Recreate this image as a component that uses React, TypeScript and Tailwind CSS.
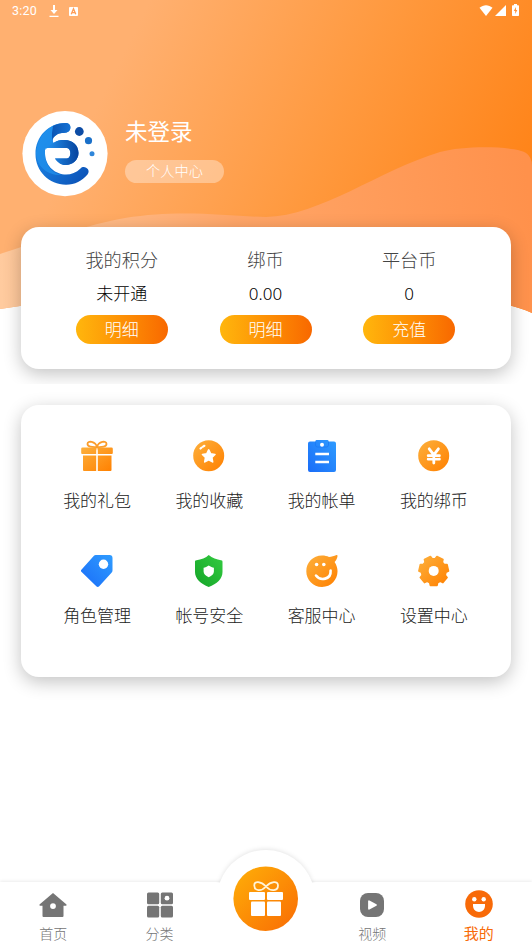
import type { ReactNode } from "react";

const balances = [
  { title: "我的积分", value: "未开通", action: "明细" },
  { title: "绑币", value: "0.00", action: "明细" },
  { title: "平台币", value: "0", action: "充值" },
];

const menu: { label: string; icon: ReactNode }[] = [
  { label: "我的礼包", icon: <GiftIcon /> },
  { label: "我的收藏", icon: <StarIcon /> },
  { label: "我的帐单", icon: <BillIcon /> },
  { label: "我的绑币", icon: <CoinIcon /> },
  { label: "角色管理", icon: <TagIcon /> },
  { label: "帐号安全", icon: <ShieldIcon /> },
  { label: "客服中心", icon: <ServiceIcon /> },
  { label: "设置中心", icon: <GearIcon /> },
];

function Gradients() {
  return (
    <svg className="absolute h-0 w-0" aria-hidden="true">
      <defs>
        <linearGradient id="orange" x1="0" y1="0" x2="1" y2="1">
          <stop offset="0" stopColor="#fdb03c" />
          <stop offset="1" stopColor="#ff8000" />
        </linearGradient>
        <linearGradient id="blue" x1="0" y1="1" x2="1" y2="0">
          <stop offset="0" stopColor="#1a6df8" />
          <stop offset="1" stopColor="#2f9cff" />
        </linearGradient>
        <linearGradient id="green" x1="1" y1="0" x2="0" y2="1">
          <stop offset="0" stopColor="#33cb40" />
          <stop offset="1" stopColor="#14a428" />
        </linearGradient>
      </defs>
    </svg>
  );
}

function GiftIcon() {
  return (
    <svg viewBox="0 0 32 32" className="h-8 w-8">
      <path
        d="M16 7C14.500 1.500 6.500 0 6.500 4C6.500 7 11 7.200 16 7C21 7.200 25.500 7 25.500 4C25.500 0 17.500 1.500 16 7Z"
        fill="none"
        stroke="#fb9d2b"
        strokeWidth="1.800"
      />
      <path
        d="M1.500 7.500H15.200V14H1.200a1 1 0 0 1-1-1V8.800a1.300 1.300 0 0 1 1.300-1.300ZM16.800 7.500H30.500a1.300 1.300 0 0 1 1.300 1.300V13a1 1 0 0 1-1 1H16.800ZM2 15.500H15.200V31H3a1 1 0 0 1-1-1ZM16.800 15.500H30.500V30a1 1 0 0 1-1 1H16.800Z"
        fill="url(#orange)"
      />
    </svg>
  );
}

function StarIcon() {
  return (
    <svg viewBox="0 0 32 32" className="h-8 w-8">
      <circle cx="15.700" cy="15.700" r="15.500" fill="url(#orange)" />
      <path
        d="M15.700 9.900l1.900 3.900 4.300.7-3.100 3 .8 4.300-3.900-2-3.900 2 .8-4.300-3.100-3 4.300-.7Z"
        fill="#fff"
        stroke="#fff"
        strokeWidth="1.700"
        strokeLinejoin="round"
      />
      <path
        d="M7.500 8.500L8.400 7.700M10 6.600L11.400 5.800"
        stroke="#fff"
        strokeWidth="2.200"
        strokeLinecap="round"
      />
    </svg>
  );
}

function BillIcon() {
  return (
    <svg viewBox="0 0 32 32" className="h-8 w-8">
      <path
        d="M4 1.500H9.500V1a1 1 0 0 1 1-1H21.500a1 1 0 0 1 1 1V1.500H28a2 2 0 0 1 2 2V30a2 2 0 0 1-2 2H4a2 2 0 0 1-2-2V3.500a2 2 0 0 1 2-2Z"
        fill="url(#blue)"
      />
      <path d="M9.500 1.700V5a2 2 0 0 0 2 2H20.500a2 2 0 0 0 2-2V1.700" fill="none" stroke="#1c78f5" strokeWidth=".8" />
      <circle cx="16" cy="4.800" r="2" fill="#fff" />
      <path d="M9.300 14H23M9.300 22H23" stroke="#fff" strokeWidth="2.600" />
    </svg>
  );
}

function CoinIcon() {
  return (
    <svg viewBox="0 0 32 32" className="h-8 w-8">
      <circle cx="15.700" cy="15.700" r="15.500" fill="url(#orange)" />
      <path
        d="M11.200 8.800L15.800 14.800L20.400 8.800M15.800 14.800V23M10.200 15.700H21.400M10.200 19.200H21.400"
        fill="none"
        stroke="#fff"
        strokeWidth="2.800"
        strokeLinecap="round"
        strokeLinejoin="round"
      />
      <path d="M10.500 17.500H14.300M17.300 17.500H21" stroke="#fc9721" strokeWidth=".8" />
    </svg>
  );
}

function TagIcon() {
  return (
    <svg viewBox="0 0 32 32" className="h-8 w-8">
      <path
        d="M14.800 0H28.500a3 3 0 0 1 3 3V15.500a3 3 0 0 1-1 2.200L18.200 31.200a2 2 0 0 1-2.900 0L.400 16.700a1.300 1.300 0 0 1 0-1.900L12.700 1A2.800 2.800 0 0 1 14.800 0Z"
        fill="url(#blue)"
      />
      <circle cx="22.500" cy="9.200" r="4.700" fill="#fff" />
    </svg>
  );
}

function ShieldIcon() {
  return (
    <svg viewBox="0 0 32 32" className="h-8 w-8">
      <path
        d="M15.700 0C19 2.800 24 4.800 28 5.200C29.500 5.400 29.500 6 29.500 7V17C29.500 24 24 28.800 15.700 32C8 28.800 2 24 2 17V7C2 6 2 5.400 3.500 5.200C8 4.800 13 2.800 15.700 0Z"
        fill="url(#green)"
      />
      <path d="M15.700 10.600C17.500 11.900 19.500 12.600 20.900 12.700V16.500C20.900 19 19 20.900 15.700 22.200C12.500 20.900 10.600 19 10.600 16.500V12.700C12.200 12.600 14 11.900 15.700 10.600Z" fill="#fff" />
    </svg>
  );
}

function ServiceIcon() {
  return (
    <svg viewBox="0 0 32 32" className="h-8 w-8">
      <path
        d="M16 .500C19 .500 21 1 23 2C25.500 1.800 28 1.300 30.500 .100C31.300 0 31.700 .500 31.500 1.200C31.200 3.300 30.200 5.300 28.600 7C36 18 28.500 32 16 32C7 32 .300 24.800 .300 16.200C.300 7.500 7 .500 16 .500Z"
        fill="url(#orange)"
      />
      <circle cx="10.600" cy="9.500" r="1.800" fill="#fff" />
      <circle cx="17.800" cy="9.500" r="1.800" fill="#fff" />
      <path
        d="M10 20.500C14.500 26.500 25.300 24.500 24.600 15.500"
        fill="none"
        stroke="#fff"
        strokeWidth="2.600"
        strokeLinecap="round"
      />
    </svg>
  );
}

// seven teeth, one of them pointing straight down
const gearPoints = Array.from({ length: 7 }, (_, i) => {
  const middle = 90 + (i * 360) / 7;
  return [
    [-19, 12.3],
    [-13, 14.8],
    [13, 14.8],
    [19, 12.3],
  ]
    .map(([offset, radius]) => {
      const angle = ((middle + offset) * Math.PI) / 180;
      return `${(15.7 + radius * Math.cos(angle)).toFixed(2)},${(16 + radius * Math.sin(angle)).toFixed(2)}`;
    })
    .join(" ");
}).join(" ");

function GearIcon() {
  return (
    <svg viewBox="0 0 32 32" className="h-8 w-8">
      <polygon
        points={gearPoints}
        fill="url(#orange)"
        stroke="url(#orange)"
        strokeWidth="1.600"
        strokeLinejoin="round"
      />
      <circle cx="15.700" cy="15.900" r="5" fill="#fff" />
    </svg>
  );
}

function HeaderWaves() {
  return (
    <svg
      viewBox="0 0 532 384"
      className="absolute inset-x-0 top-0 -z-10 h-[384px] w-full"
      preserveAspectRatio="none"
      aria-hidden="true"
    >
      <defs>
        <linearGradient id="sky" gradientUnits="userSpaceOnUse" x1="120" y1="60" x2="520" y2="260">
          <stop offset="0" stopColor="#ffb070" />
          <stop offset=".5" stopColor="#ff993e" />
          <stop offset="1" stopColor="#ff8012" />
        </linearGradient>
        <linearGradient id="wave" gradientUnits="userSpaceOnUse" x1="0" y1="280" x2="532" y2="220">
          <stop offset="0" stopColor="#ffcb9f" />
          <stop offset=".45" stopColor="#ffa668" />
          <stop offset="1" stopColor="#ff914b" />
        </linearGradient>
      </defs>
      <path d="M0 0H532V313C523 309 516 307 508 305C420 285 110 285 20 306L0 309Z" fill="url(#sky)" />
      <path
        d="M0 254C40 241 90 224 125 218C180 209 225 216 266 217C320 216 380 170 440 152C465 145 515 146 526 153Q532 157 532 166V313C523 309 516 307 508 305C420 285 110 285 20 306L0 309Z"
        fill="url(#wave)"
      />
    </svg>
  );
}

function StatusBar() {
  return (
    <div className="flex h-[22px] items-center justify-between pr-[13px] pl-3 text-white">
      <div className="flex items-center">
        <span className="w-[37px] font-['Roboto',sans-serif] text-[12.500px] leading-none tracking-[0.2px]">3:20</span>
        <svg viewBox="0 0 10 12" className="h-3 w-2.5" fill="currentColor">
          <path d="M4 0h2v5h2.500L5 9 1.500 5H4ZM.500 10.800h9V12h-9Z" />
        </svg>
        <svg viewBox="0 0 10 10" className="ml-2.5 h-[9px] w-[9px]">
          <rect width="10" height="10" rx="1" fill="#fff" />
          <path d="M2.500 8L5 2L7.500 8M3.500 6.200h3" fill="none" stroke="#ff9d56" strokeWidth="1.500" />
        </svg>
      </div>
      <div className="mb-[2px] flex items-center gap-[2px]">
        <svg viewBox="0 0 13 11" className="h-[11px] w-[14px]" fill="currentColor">
          <path d="M0 2.800C4-.600 9-.600 13 2.800L6.500 11Z" />
        </svg>
        <svg viewBox="0 0 11 11" className="h-[11px] w-[11px]" fill="currentColor">
          <path d="M11 0V11H0Z" />
        </svg>
        <svg viewBox="0 0 7 12" className="ml-1 h-3 w-[7px]">
          <path d="M2 0h3v1.300h1.300a.7.7 0 0 1 .7.7v9.300a.7.7 0 0 1-.7.7H.7a.7.7 0 0 1-.7-.7V2a.7.7 0 0 1 .7-.7H2Z" fill="#fff" />
          <path d="M4 3L1.800 7H3.200V10L5.300 6H4Z" fill="#ff9137" />
        </svg>
      </div>
    </div>
  );
}

function Avatar() {
  return (
    <svg viewBox="0 0 86 86" className="h-[86px] w-[86px] shrink-0">
      <defs>
        <linearGradient id="arc" x1="0" y1="0" x2="1" y2="1">
          <stop offset="0" stopColor="#1c8cec" />
          <stop offset=".5" stopColor="#1674d6" />
          <stop offset="1" stopColor="#0a4db2" />
        </linearGradient>
        <linearGradient id="top" x1="0" y1="0" x2="1" y2="0">
          <stop offset="0" stopColor="#0b55b4" />
          <stop offset="1" stopColor="#1672d4" />
        </linearGradient>
        <linearGradient id="hook" x1="0" y1="0" x2="1" y2="0">
          <stop offset="0" stopColor="#2290ed" />
          <stop offset="1" stopColor="#06439e" />
        </linearGradient>
      </defs>
      <circle cx="43" cy="42.600" r="42.600" fill="#fff" />
      <path
        d="M44.500 12C27 11.500 13.500 25 13.500 43C13.500 60 27 73.700 44 73.700C53 73.700 60 70 65.500 63.500C69.500 58.500 62 53.500 58.500 57.500C46 70 24 62 23 43V39C23 37 24 37 25.500 37H45C49.500 37 49.500 47.500 45 47.500H33C36 51.500 39 54 43.500 54C51 54 56.500 48.500 56.500 42C56.500 34 50 29 43 29C38 29 35 29.500 31.500 32C30 29 30.500 27 33 25C37 21.500 40 22.500 44.500 21.500C50 20 49.500 12.300 44.500 12Z"
        fill="url(#arc)"
      />
      <path d="M44.500 12C40 11.800 35 13 31 15C30 20 29 28 31.500 32C30 29 30.500 27 33 25C37 21.500 40 22.500 44.500 21.500C50 20 49.500 12.300 44.500 12Z" fill="url(#top)" />
      <path d="M14 42C16 26 24 18 31 15C30 20 29 28 31.500 32L23 39V43C23 54 30 62 40 64C27 65 15 57 14 42Z" fill="#2295ef" opacity=".65" />
      <path
        d="M31.500 32C35 29.500 38 29 43 29C50 29 56.500 34 56.500 42C56.500 48.500 51 54 43.500 54C39 54 36 51.500 33 47.500H45C49.500 47.500 49.500 37 45 37H25.500Z"
        fill="url(#hook)"
      />
      <circle cx="57.300" cy="20.500" r="4.400" fill="#0d4ca5" />
      <circle cx="66.500" cy="29.700" r="3.600" fill="#1a70c9" />
      <circle cx="70" cy="42.700" r="2.500" fill="#2f86da" />
    </svg>
  );
}

function Profile() {
  return (
    <div className="mt-[89px] ml-[22px] flex h-[86px] gap-[17px] text-white">
      <Avatar />
      <div className="pt-[4px]">
        <h1 className="text-[22.500px] leading-[30px] font-normal">未登录</h1>
        <div className="mt-[15px] flex h-[23px] w-[99px] items-center justify-center rounded-full bg-white/35 pb-[2px] text-[14.200px] leading-none font-light">
          个人中心
        </div>
      </div>
    </div>
  );
}

function BalanceCard() {
  return (
    <section className="mx-[21px] mt-[30px] flex h-[142px] justify-center rounded-[18px] bg-white pt-5 pr-px shadow-[0_5px_18px_rgba(0,0,0,0.24)]">
      {balances.map((item) => (
        <div key={item.title} className="flex w-[143.700px] flex-col items-center">
          <span className="text-[18.200px] leading-6 font-light text-[#444]">{item.title}</span>
          <span className="mt-[11px] font-['Noto_Sans','Noto_Sans_CJK_SC',sans-serif] text-[17px] leading-6 font-light text-black">
            {item.value}
          </span>
          <button className="mt-[9px] h-[29px] w-[92px] rounded-full bg-linear-to-r from-[#ffb60d] to-[#f86800] pb-[2px] text-[17px] leading-none font-light text-white">
            {item.action}
          </button>
        </div>
      ))}
    </section>
  );
}

function MenuCard() {
  return (
    <section className="mx-[21px] mt-[21px] grid h-[272px] grid-cols-4 content-start gap-y-[56px] rounded-[18px] bg-white pt-[35px] pr-[21px] pl-5 shadow-[0_5px_18px_rgba(0,0,0,0.24)]">
      {menu.map((item) => (
        <div key={item.label} className="flex h-[59px] flex-col items-center justify-between">
          {item.icon}
          <span className="-mb-[13px] text-[17px] leading-6 font-light text-[#222]">{item.label}</span>
        </div>
      ))}
    </section>
  );
}

function NavItem({ label, children }: { label: string; children: ReactNode }) {
  return (
    <div className="flex w-[106.400px] flex-col items-center pt-[9px] text-[#757575]">
      <div className="flex h-7 items-center">{children}</div>
      <span className="mt-1 text-[14px] leading-5 font-light">{label}</span>
    </div>
  );
}

function TabBar() {
  return (
    <nav className="relative mt-auto flex h-[65px] bg-white shadow-[0_-1px_3px_rgba(0,0,0,0.08)]">
      <NavItem label="首页">
        <svg viewBox="0 0 28 26" className="h-[26px] w-7">
          <path
            fillRule="evenodd"
            d="M14 1L27.500 12.500Q28 13.500 27 13.700H24.500V24a1 1 0 0 1-1 1H4.500a1 1 0 0 1-1-1V13.700H1Q0 13.500 .500 12.500ZM14 11.200a2.900 2.900 0 1 0 0 5.800a2.900 2.900 0 1 0 0-5.800Z"
            fill="currentColor"
          />
        </svg>
      </NavItem>
      <NavItem label="分类">
        <svg viewBox="0 0 26 26" className="h-[26px] w-[26px]" fill="currentColor">
          <rect x="0" y=".500" width="12.200" height="11.700" rx="1.500" />
          <rect x="13.800" y=".500" width="12.200" height="11.700" rx="1.500" />
          <rect x="0" y="13.800" width="12.200" height="11.700" rx="1.500" />
          <rect x="13.800" y="13.800" width="12.200" height="11.700" rx="1.500" />
          <circle cx="20" cy="6.200" r="2.400" fill="#fff" />
        </svg>
      </NavItem>
      <div className="w-[106.400px]">
        <svg viewBox="0 0 106 97" className="absolute top-[-32px] left-1/2 h-[97px] w-[106px] -translate-x-1/2 overflow-visible">
          <defs>
            <linearGradient id="play" x1="0" y1="0" x2="1" y2="1">
              <stop offset="0" stopColor="#ffb008" />
              <stop offset="1" stopColor="#f96b04" />
            </linearGradient>
          </defs>
          <path
            d="M7 32A49 49 0 0 1 99 32V75H7Z"
            fill="#fff"
            className="drop-shadow-[0_-1px_2px_rgba(0,0,0,0.1)]"
          />
          <rect x="0" y="33" width="106" height="64" fill="#fff" />
          <circle cx="52.700" cy="48.700" r="32.300" fill="url(#play)" />
          <path
            d="M53 36.500C48 31 41 30.500 41.300 35.500C41.500 41 48 42 53 36.500C58 42 65 41 65 35.500C65 30.500 58 31 53 36.500Z"
            fill="none"
            stroke="#fff4d8"
            strokeWidth="1.800"
          />
          <g fill="#fff">
            <rect x="36" y="42" width="16" height="8" rx="1" />
            <rect x="54" y="42" width="16" height="8" rx="1" />
            <rect x="38" y="51.500" width="14" height="14.500" rx="1" />
            <rect x="54" y="51.500" width="14" height="14.500" rx="1" />
          </g>
        </svg>
      </div>
      <NavItem label="视频">
        <svg viewBox="0 0 24 24" className="h-6 w-6">
          <rect width="24" height="24" rx="8" fill="currentColor" />
          <path d="M9 8.200V15.800L16 12Z" fill="#fff" stroke="#fff" strokeWidth="1.800" strokeLinejoin="round" />
        </svg>
      </NavItem>
      <div className="flex w-[106.400px] flex-col items-center pt-2 text-[#f86a08]">
        <svg viewBox="0 0 28 28" className="h-7 w-7">
          <circle cx="14" cy="14" r="13.800" fill="currentColor" />
          <circle cx="9.300" cy="9.300" r="2.200" fill="#fff" />
          <circle cx="18.700" cy="9.300" r="2.200" fill="#fff" />
          <path d="M8 14H20V15.500C20 24 8 24 8 15.500Z" fill="#fff" />
        </svg>
        <span className="mt-[5px] text-[15px] leading-5 font-normal">我的</span>
      </div>
    </nav>
  );
}

export default function App() {
  return (
    <main className="flex h-[947px] w-full flex-col overflow-hidden bg-white font-['Noto_Sans_CJK_SC',sans-serif]">
      <Gradients />
      <header className="relative isolate h-[384px] shrink-0 overflow-hidden">
        <HeaderWaves />
        <StatusBar />
        <Profile />
        <BalanceCard />
      </header>
      <MenuCard />
      <TabBar />
    </main>
  );
}
